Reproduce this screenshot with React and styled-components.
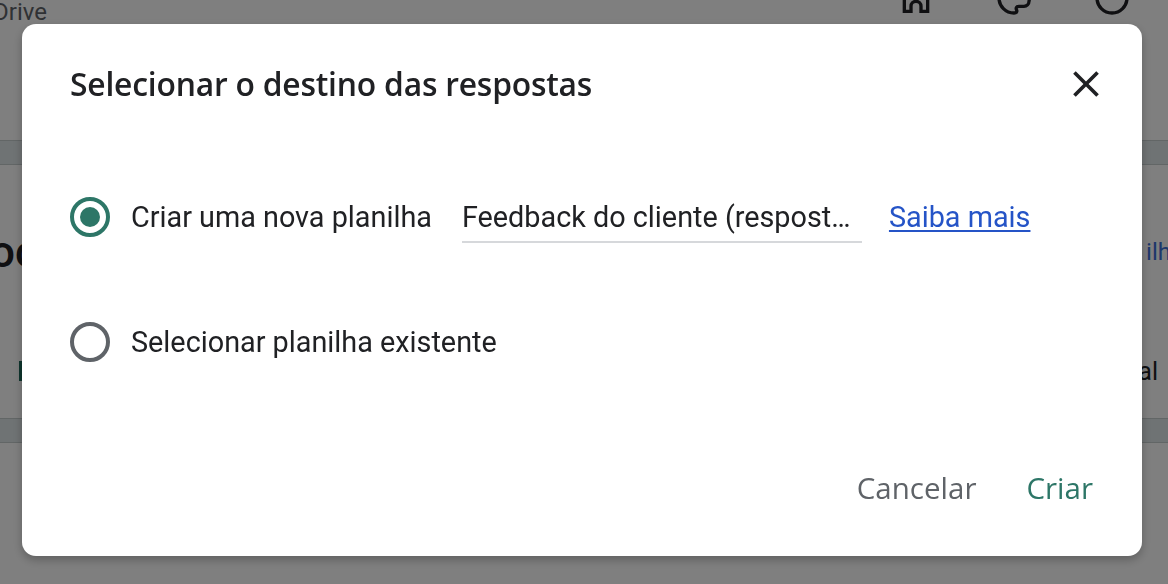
import React from 'react'
import styled, { createGlobalStyle } from 'styled-components'

const Global = createGlobalStyle`
  html, body {
    margin: 0;
    padding: 0;
    width: 1168px;
    height: 584px;
    overflow: hidden;
    background: #fff;
    font-family: Roboto, "Liberation Sans", sans-serif;
  }
`

// page underneath the dialog
const Page = styled.div`
  width: 1168px;
  height: 584px;
  display: flex;
  flex-direction: column;
  overflow: hidden;
`
const Header = styled.div`
  height: 140px;
  display: flex;
  justify-content: space-between;
  align-items: flex-start;
`
const Brand = styled.div`
  font-size: 24px;
  color: #5f6368;
  margin: -2px 0 0 -7px;
`
const HeaderIcons = styled.div`
  display: flex;
  gap: 58px;
  margin: -22px 36px 0 0;
`
const Band = styled.div`
  height: 23px;
  background: #dfe6e8;
  border-top: 1px solid #c4cccd;
  border-bottom: 1px solid #c4cccd;
`
const Section = styled.div`
  display: flex;
  flex-direction: column;
  gap: 79px;
  padding: 67px 0 27px;
`
const SideRow = styled.div`
  height: 40px;
  display: flex;
  justify-content: space-between;
  align-items: center;
`
const BigTitle = styled.div`
  font-size: 44px;
  font-weight: 500;
  color: #202124;
  margin-left: -10px;
`
const SideLink = styled.div`
  font-size: 24px;
  color: #3b6fd6;
  margin-right: -16px;
`
const SideText = styled.div`
  font-size: 25px;
  color: #202124;
  margin-right: 10px;
`
const Tick = styled.div`
  width: 3px;
  height: 20px;
  background: #1e6b5c;
  margin-left: 19px;
`

const Overlay = styled.div`
  position: fixed;
  inset: 0;
  background: rgba(0, 0, 0, 0.5);
`

const Dialog = styled.div`
  position: fixed;
  left: 22px;
  top: 24px;
  width: 1120px;
  height: 532px;
  box-sizing: border-box;
  background: #fff;
  border-radius: 14px;
  box-shadow: 0 4px 10px rgba(0, 0, 0, 0.25);
  display: flex;
  flex-direction: column;
  padding: 38px 34px 48px 48px;
`
const TitleRow = styled.div`
  height: 44px;
  display: flex;
  justify-content: space-between;
  align-items: center;
`
const Title = styled.h2`
  margin: 0;
  font-family: "Open Sans", Roboto, sans-serif;
  font-weight: 600;
  font-size: 31.8px;
  line-height: 44px;
  color: #202124;
  letter-spacing: -0.2px;
`
const CloseButton = styled.button`
  width: 44px;
  height: 44px;
  border: 0;
  padding: 0;
  background: none;
  display: flex;
  align-items: center;
  justify-content: center;
  cursor: pointer;
`
const Options = styled.div`
  display: flex;
  flex-direction: column;
  gap: 85px;
  margin-top: 91px;
`
const OptionRow = styled.label`
  display: flex;
  align-items: center;
  height: 40px;
  font-size: 28.8px;
  color: #202124;
  white-space: nowrap;
`
const Radio = styled.span`
  box-sizing: border-box;
  flex: none;
  width: 40px;
  height: 40px;
  border-radius: 50%;
  border: 4px solid ${p => (p.checked ? '#2d7667' : '#5f6368')};
  display: flex;
  align-items: center;
  justify-content: center;
  margin-right: 21px;
  &::after {
    content: '';
    width: 20px;
    height: 20px;
    border-radius: 50%;
    background: ${p => (p.checked ? '#2d7667' : 'transparent')};
  }
`
const NameField = styled.div`
  flex: none;
  width: 400px;
  box-sizing: border-box;
  margin-left: 30px;
  padding: 6px 0 4px;
  line-height: 40px;
  border-bottom: 2px solid #d6d8db;
  white-space: nowrap;
  overflow: hidden;
  text-overflow: ellipsis;
`
const LearnMore = styled.a`
  margin-left: 27px;
  color: #2554c7;
  text-decoration: underline;
  text-underline-offset: 3px;
`
const Footer = styled.div`
  margin-top: auto;
  display: flex;
  justify-content: flex-end;
  gap: 50px;
  padding-right: 15px;
`
const TextButton = styled.button`
  border: 0;
  background: none;
  padding: 0;
  font-family: "Open Sans", Roboto, sans-serif;
  font-size: 29.5px;
  line-height: 40px;
  font-weight: 500;
  color: ${p => (p.primary ? '#2d7667' : '#5f6368')};
  cursor: pointer;
`

function PartIcon({ d }) {
  return (
    <svg width="40" height="40" viewBox="0 0 24 24" fill="none" stroke="#202124" strokeWidth="2">
      <path d={d} />
    </svg>
  )
}

export default function App() {
  return (
    <>
      <Global />
      <Page>
        <Header>
          <Brand>Drive</Brand>
          <HeaderIcons>
            <PartIcon d="M5 5v15h4v-3a3 3 0 0 1 6 0v3h4V5" />
            <PartIcon d="M12 3a9 9 0 0 0 0 18c1.5 0 2-1 1.5-2s0-2 1.5-2H18a3 3 0 0 0 3-3 9 9 0 0 0-9-11z" />
            <PartIcon d="M12 3a9 9 0 1 0 0 18 9 9 0 0 0 0-18z" />
          </HeaderIcons>
        </Header>
        <Band />
        <Section>
          <SideRow>
            <BigTitle>oc</BigTitle>
            <SideLink>ilha</SideLink>
          </SideRow>
          <SideRow>
            <Tick />
            <SideText>al</SideText>
          </SideRow>
        </Section>
        <Band />
      </Page>
      <Overlay />
      <Dialog role="dialog">
        <TitleRow>
          <Title>Selecionar o destino das respostas</Title>
          <CloseButton aria-label="Fechar">
            <svg width="44" height="44" viewBox="0 0 24 24" fill="#202124">
              <path d="M19 6.41L17.59 5 12 10.59 6.41 5 5 6.41 10.59 12 5 17.59 6.41 19 12 13.41 17.59 19 19 17.59 13.41 12z" />
            </svg>
          </CloseButton>
        </TitleRow>
        <Options>
          <OptionRow>
            <Radio checked />
            Criar uma nova planilha
            <NameField>Feedback do cliente (respostas)</NameField>
            <LearnMore href="#">Saiba mais</LearnMore>
          </OptionRow>
          <OptionRow>
            <Radio />
            Selecionar planilha existente
          </OptionRow>
        </Options>
        <Footer>
          <TextButton>Cancelar</TextButton>
          <TextButton primary>Criar</TextButton>
        </Footer>
      </Dialog>
    </>
  )
}
